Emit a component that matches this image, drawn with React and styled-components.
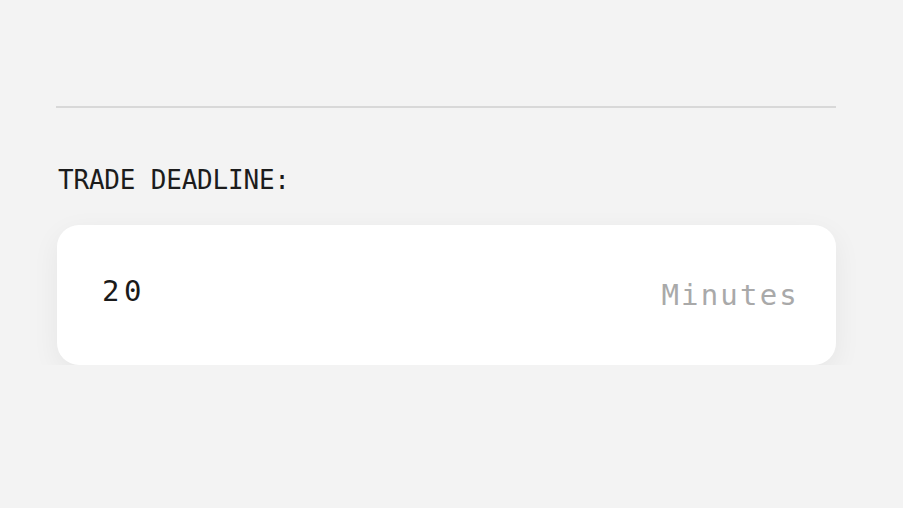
import styled, { createGlobalStyle } from "styled-components";

const GlobalStyle = createGlobalStyle`
  html, body {
    margin: 0;
    padding: 0;
    background: #f3f3f3;
  }
  body {
    font-family: "DejaVu Sans Mono", "Liberation Mono", monospace;
  }
`;

const Page = styled.div`
  width: 780px;
  padding: 106px 0 0 56px;
`;

const Divider = styled.hr`
  margin: 0;
  border: none;
  height: 2px;
  background: #d8d8d8;
`;

const Label = styled.div`
  margin-top: 57px;
  padding-left: 2px;
  font-size: 26px;
  line-height: 30px;
  color: #1c1c1c;
  letter-spacing: -0.2px;
`;

const Field = styled.div`
  margin-top: 30px;
  margin-left: 1px;
  height: 140px;
  background: #ffffff;
  border-radius: 22px;
  box-shadow: 0 8px 28px rgba(0, 0, 0, 0.06);
  display: flex;
  align-items: center;
  justify-content: space-between;
  padding: 0 37px 0 45px;
`;

const Value = styled.span`
  font-size: 29px;
  letter-spacing: 4.5px;
  color: #1a1a1a;
  margin-top: -8px;
`;

const Unit = styled.span`
  font-size: 29px;
  letter-spacing: 2.2px;
  color: #a9a9a9;
`;

function App() {
  return (
    <>
      <GlobalStyle />
      <Page>
        <Divider />
        <Label>TRADE DEADLINE:</Label>
        <Field>
          <Value>20</Value>
          <Unit>Minutes</Unit>
        </Field>
      </Page>
    </>
  );
}

export default App;
